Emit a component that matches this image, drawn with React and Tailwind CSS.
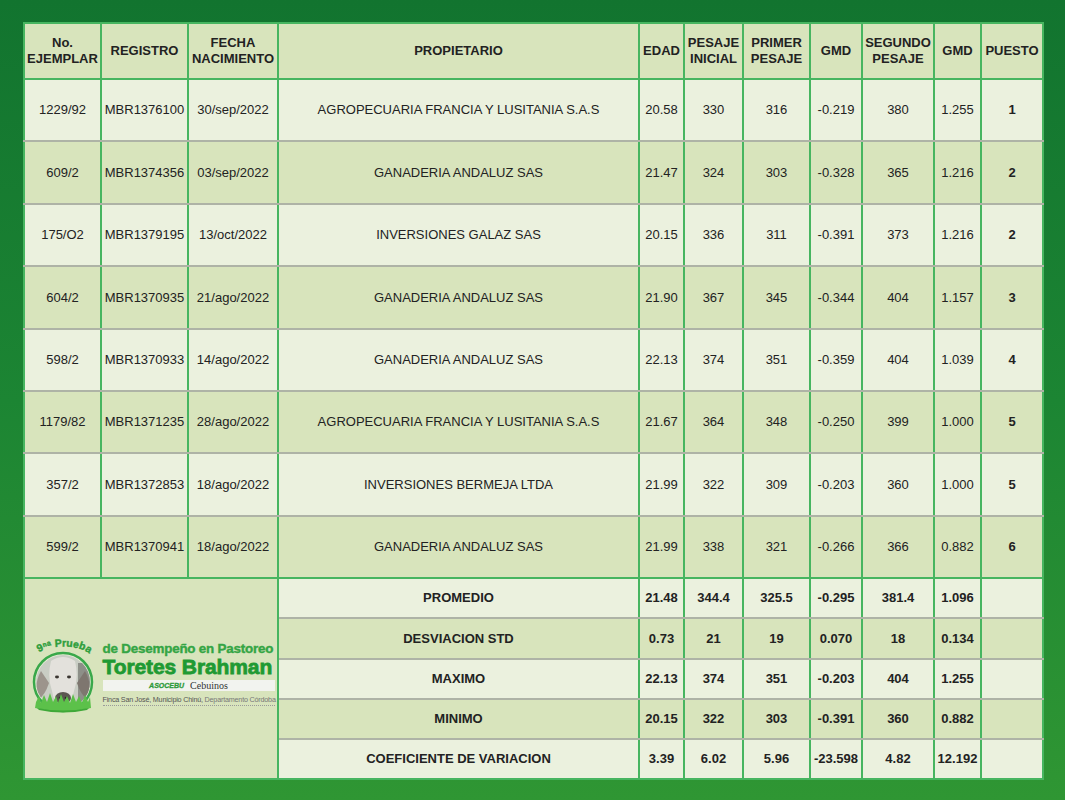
import React from 'react';

// Tabla de resultados: prueba de desempeño en pastoreo, toretes Brahman
const rows = [
  ['1229/92', 'MBR1376100', '30/sep/2022', 'AGROPECUARIA FRANCIA Y LUSITANIA S.A.S', '20.58', '330', '316', '-0.219', '380', '1.255', '1'],
  ['609/2', 'MBR1374356', '03/sep/2022', 'GANADERIA ANDALUZ SAS', '21.47', '324', '303', '-0.328', '365', '1.216', '2'],
  ['175/O2', 'MBR1379195', '13/oct/2022', 'INVERSIONES GALAZ SAS', '20.15', '336', '311', '-0.391', '373', '1.216', '2'],
  ['604/2', 'MBR1370935', '21/ago/2022', 'GANADERIA ANDALUZ SAS', '21.90', '367', '345', '-0.344', '404', '1.157', '3'],
  ['598/2', 'MBR1370933', '14/ago/2022', 'GANADERIA ANDALUZ SAS', '22.13', '374', '351', '-0.359', '404', '1.039', '4'],
  ['1179/82', 'MBR1371235', '28/ago/2022', 'AGROPECUARIA FRANCIA Y LUSITANIA S.A.S', '21.67', '364', '348', '-0.250', '399', '1.000', '5'],
  ['357/2', 'MBR1372853', '18/ago/2022', 'INVERSIONES BERMEJA LTDA', '21.99', '322', '309', '-0.203', '360', '1.000', '5'],
  ['599/2', 'MBR1370941', '18/ago/2022', 'GANADERIA ANDALUZ SAS', '21.99', '338', '321', '-0.266', '366', '0.882', '6'],
];

const summary = [
  ['PROMEDIO', '21.48', '344.4', '325.5', '-0.295', '381.4', '1.096'],
  ['DESVIACION STD', '0.73', '21', '19', '0.070', '18', '0.134'],
  ['MAXIMO', '22.13', '374', '351', '-0.203', '404', '1.255'],
  ['MINIMO', '20.15', '322', '303', '-0.391', '360', '0.882'],
  ['COEFICIENTE DE VARIACION', '3.39', '6.02', '5.96', '-23.598', '4.82', '12.192'],
];

const widths = [77, 87, 90, 361, 45, 59, 67, 52, 72, 47, 62];

const headers = [
  ['No.', 'EJEMPLAR'],
  ['REGISTRO'],
  ['FECHA', 'NACIMIENTO'],
  ['PROPIETARIO'],
  ['EDAD'],
  ['PESAJE', 'INICIAL'],
  ['PRIMER', 'PESAJE'],
  ['GMD'],
  ['SEGUNDO', 'PESAJE'],
  ['GMD'],
  ['PUESTO'],
];

function Logo() {
  return (
    <div className="flex items-center justify-center gap-[5px] pb-[12px]">
      {/* medallón con la cabeza del torete */}
      <svg width="70" height="80" viewBox="0 0 70 80">
        <defs>
          <path id="arc" d="M6 24 A30 14 0 0 1 64 24" />
          <clipPath id="circ">
            <circle cx="35" cy="49" r="27" />
          </clipPath>
        </defs>
        <text fontFamily="Liberation Sans, Arial, sans-serif" fontWeight="700" fontSize="10.5" fill="#2f9e3c" stroke="#2f9e3c" strokeWidth="0.4">
          <textPath href="#arc" startOffset="52%" textAnchor="middle">
            9ⁿᵃ Prueba
          </textPath>
        </text>
        <circle cx="35" cy="49" r="29" fill="#e6eed4" stroke="#39a84a" strokeWidth="2.5" />
        <g clipPath="url(#circ)">
          <rect x="0" y="16" width="70" height="70" fill="#c9cdc4" />
          <rect x="50" y="30" width="20" height="40" fill="#8d8f88" />
          {/* orejas */}
          <path d="M13 38 Q5 52 11 66 Q17 62 21 50 Z" fill="#9c948c" />
          <path d="M57 38 Q65 52 59 66 Q53 62 49 50 Z" fill="#7e766f" />
          {/* cabeza */}
          <path d="M23 28 Q35 20 47 28 Q51 44 46 58 Q44 72 35 74 Q26 72 24 58 Q19 44 23 28 Z" fill="#e3e1dc" />
          <ellipse cx="29" cy="44" rx="2" ry="1.4" fill="#3a3530" />
          <ellipse cx="41" cy="44" rx="2" ry="1.4" fill="#3a3530" />
          <ellipse cx="35" cy="65" rx="8" ry="6" fill="#5b5650" />
          <circle cx="32" cy="65" r="1.3" fill="#2a2622" />
          <circle cx="38" cy="65" r="1.3" fill="#2a2622" />
        </g>
        {/* pasto */}
        <path d="M7 75 L8 69 L11 63 L13 70 L16 62 L19 69 L22 60 L25 69 L28 63 L30 70 L33 61 L36 69 L39 63 L42 70 L45 61 L48 69 L51 63 L54 70 L57 62 L60 69 L62 64 L63 75 Q35 82 7 75 Z" fill="#5cc14a" />
        <path d="M9 75 Q35 80 61 75 L59 77 Q35 82 11 77 Z" fill="#3fa838" />
      </svg>
      <div className="mt-[2px] flex w-[172px] flex-col" style={{ fontFamily: '"Liberation Sans", Arial, sans-serif' }}>
        <div className="text-[13.4px] leading-[15px] font-bold tracking-[-0.2px] text-[#34a544] [-webkit-text-stroke:0.4px_#34a544]">
          de Desempeño en Pastoreo
        </div>
        <div className="text-[21px] leading-[22px] font-bold tracking-[-0.1px] text-[#1f9a33] [-webkit-text-stroke:0.8px_#1f9a33]">
          Toretes Brahman
        </div>
        <div className="mt-[2px] flex h-[11px] items-center justify-center gap-[6px] bg-[#f2f3ef]">
          <span className="text-[7px] leading-none font-bold italic text-[#2e9a3a] [-webkit-text-stroke:0.3px_#2e9a3a]">ASOCEBU</span>
          <span className="font-['Liberation_Serif',serif] text-[10px] leading-none text-[#333]">Cebuinos</span>
        </div>
        <div className="mt-[4px] border-b border-dotted border-[#9a9a9a] pb-[1px] text-[7.2px] leading-[9px] tracking-[-0.2px] whitespace-nowrap text-[#555]">
          Finca San José, Municipio Chinú, <span className="text-[#777]">Departamento Córdoba</span>
        </div>
      </div>
    </div>
  );
}

export default function App() {
  const green = 'border-[#47b560]';
  return (
    <div
      className="h-[800px] w-[1065px] bg-linear-to-b from-[#12742f] via-[#1c8533] to-[#2f9633] pt-[22px] pl-[23px]"
      style={{ fontFamily: '"Liberation Sans", Arial, sans-serif' }}
    >
      <table className={`table-fixed border-collapse border-2 ${green} text-[13px] text-[#222]`} style={{ width: 1019 }}>
        <colgroup>
          {widths.map((w, i) => (
            <col key={i} style={{ width: w }} />
          ))}
        </colgroup>
        <thead>
          <tr className="h-[56px] bg-[#d8e4bc]">
            {headers.map((h, i) => (
              <th
                key={i}
                className={`border-2 ${green} p-0 text-center align-middle text-[13px] leading-[16px] font-bold whitespace-nowrap`}
              >
                {h.map((l, j) => (
                  <div key={j}>{l}</div>
                ))}
              </th>
            ))}
          </tr>
        </thead>
        <tbody>
          {rows.map((r, ri) => (
            <tr
              key={ri}
              className={`h-[62.4px] ${ri % 2 === 0 ? 'bg-[#ebf1de]' : 'bg-[#d8e4bc]'}`}
            >
              {r.map((c, ci) => (
                <td
                  key={ci}
                  className={`border-x-2 ${green} border-b-2 ${
                    ri === rows.length - 1 ? 'border-b-[#47b560]' : 'border-b-[#aeb3a6]'
                  } p-0 text-center align-middle whitespace-nowrap ${ci === 10 ? 'font-bold' : ''}`}
                >
                  {c}
                </td>
              ))}
            </tr>
          ))}
          {summary.map((s, si) => (
            <tr key={si} className={`h-[40.2px] ${si % 2 === 0 ? 'bg-[#ebf1de]' : 'bg-[#d8e4bc]'}`}>
              {si === 0 && (
                <td rowSpan={5} colSpan={3} className={`border-2 ${green} bg-[#d8e4bc] p-0 align-middle`}>
                  <Logo />
                </td>
              )}
              {s.map((c, ci) => (
                <td
                  key={ci}
                  className={`border-x-2 ${green} border-b-2 ${
                    si === summary.length - 1 ? 'border-b-[#47b560]' : 'border-b-[#aeb3a6]'
                  } p-0 text-center align-middle font-bold whitespace-nowrap`}
                >
                  {c}
                </td>
              ))}
              <td className={`border-x-2 ${green} border-b-2 ${si === summary.length - 1 ? 'border-b-[#47b560]' : 'border-b-[#aeb3a6]'} p-0`} />
            </tr>
          ))}
        </tbody>
      </table>
    </div>
  );
}
